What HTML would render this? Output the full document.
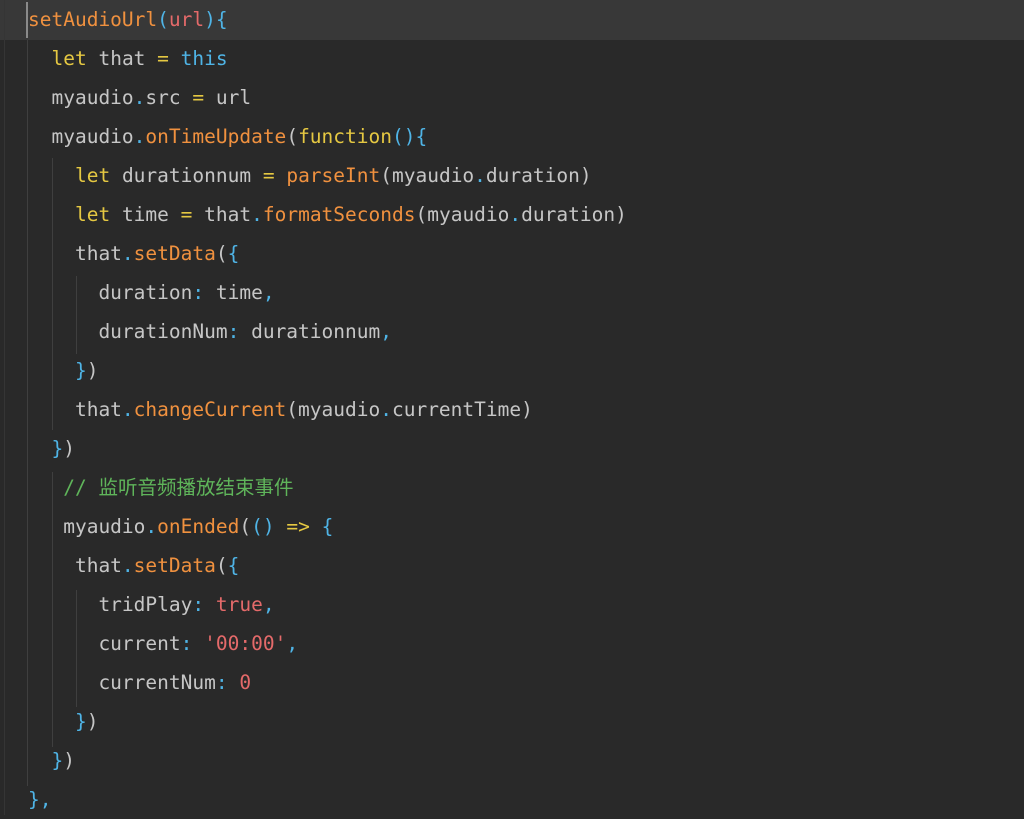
<!DOCTYPE html>
<html><head><meta charset="utf-8"><style>
html,body{margin:0;padding:0}
body{width:1024px;height:815px;background:#292929;position:relative;overflow:hidden;font-family:"DejaVu Sans Mono","Liberation Mono","Noto Sans CJK SC",monospace;font-size:19.5px;color:#c6c6c6}
.hl{position:absolute;left:0;top:0;width:1024px;height:40px;background:#383838}
.g{position:absolute;width:1px;background:#3f3f3f}
.cur{position:absolute;left:26px;top:2px;width:2px;height:36px;background:#8a8a8a}
.l{position:absolute;left:28px;height:39px;line-height:39px;white-space:pre}
.o{color:#f0913f}.y{color:#e5c842}.c{color:#4fb4e6}.r{color:#e46a6a}.m{color:#5fb55a;font-family:"DejaVu Sans Mono","Noto Sans CJK SC",monospace}
</style></head><body>
<div class="hl"></div>
<div class="g" style="left:4px;top:0;height:815px;background:#353535"></div>
<div class="g" style="left:27px;top:40px;height:746px"></div>
<div class="g" style="left:52px;top:158px;height:272px"></div>
<div class="g" style="left:76px;top:276px;height:78px"></div>
<div class="g" style="left:52px;top:472px;height:275px"></div>
<div class="g" style="left:76px;top:590px;height:117px"></div>
<div class="cur"></div>
<div class="l" style="top:0"><span class="o">setAudioUrl</span><span class="c">(</span><span class="r">url</span><span class="c">){</span></div>
<div class="l" style="top:39px">  <span class="y">let</span> that <span class="y">=</span> <span class="c">this</span></div>
<div class="l" style="top:78px">  myaudio<span class="c">.</span>src <span class="y">=</span> url</div>
<div class="l" style="top:117px">  myaudio<span class="c">.</span><span class="o">onTimeUpdate</span>(<span class="y">function</span><span class="c">(){</span></div>
<div class="l" style="top:156px">    <span class="y">let</span> durationnum <span class="y">=</span> <span class="o">parseInt</span>(myaudio<span class="c">.</span>duration)</div>
<div class="l" style="top:195px">    <span class="y">let</span> time <span class="y">=</span> that<span class="c">.</span><span class="o">formatSeconds</span>(myaudio<span class="c">.</span>duration)</div>
<div class="l" style="top:234px">    that<span class="c">.</span><span class="o">setData</span>(<span class="c">{</span></div>
<div class="l" style="top:273px">      duration<span class="c">:</span> time<span class="c">,</span></div>
<div class="l" style="top:312px">      durationNum<span class="c">:</span> durationnum<span class="c">,</span></div>
<div class="l" style="top:351px">    <span class="c">}</span>)</div>
<div class="l" style="top:390px">    that<span class="c">.</span><span class="o">changeCurrent</span>(myaudio<span class="c">.</span>currentTime)</div>
<div class="l" style="top:429px">  <span class="c">}</span>)</div>
<div class="l" style="top:468px">   <span class="m">// 监听音频播放结束事件</span></div>
<div class="l" style="top:507px">   myaudio<span class="c">.</span><span class="o">onEnded</span>(<span class="c">()</span> <span class="y">=&gt;</span> <span class="c">{</span></div>
<div class="l" style="top:546px">    that<span class="c">.</span><span class="o">setData</span>(<span class="c">{</span></div>
<div class="l" style="top:585px">      tridPlay<span class="c">:</span> <span class="r">true</span><span class="c">,</span></div>
<div class="l" style="top:624px">      current<span class="c">:</span> <span class="r">'00:00'</span><span class="c">,</span></div>
<div class="l" style="top:663px">      currentNum<span class="c">:</span> <span class="r">0</span></div>
<div class="l" style="top:702px">    <span class="c">}</span>)</div>
<div class="l" style="top:741px">  <span class="c">}</span>)</div>
<div class="l" style="top:780px"><span class="c">},</span></div>
</body></html>
